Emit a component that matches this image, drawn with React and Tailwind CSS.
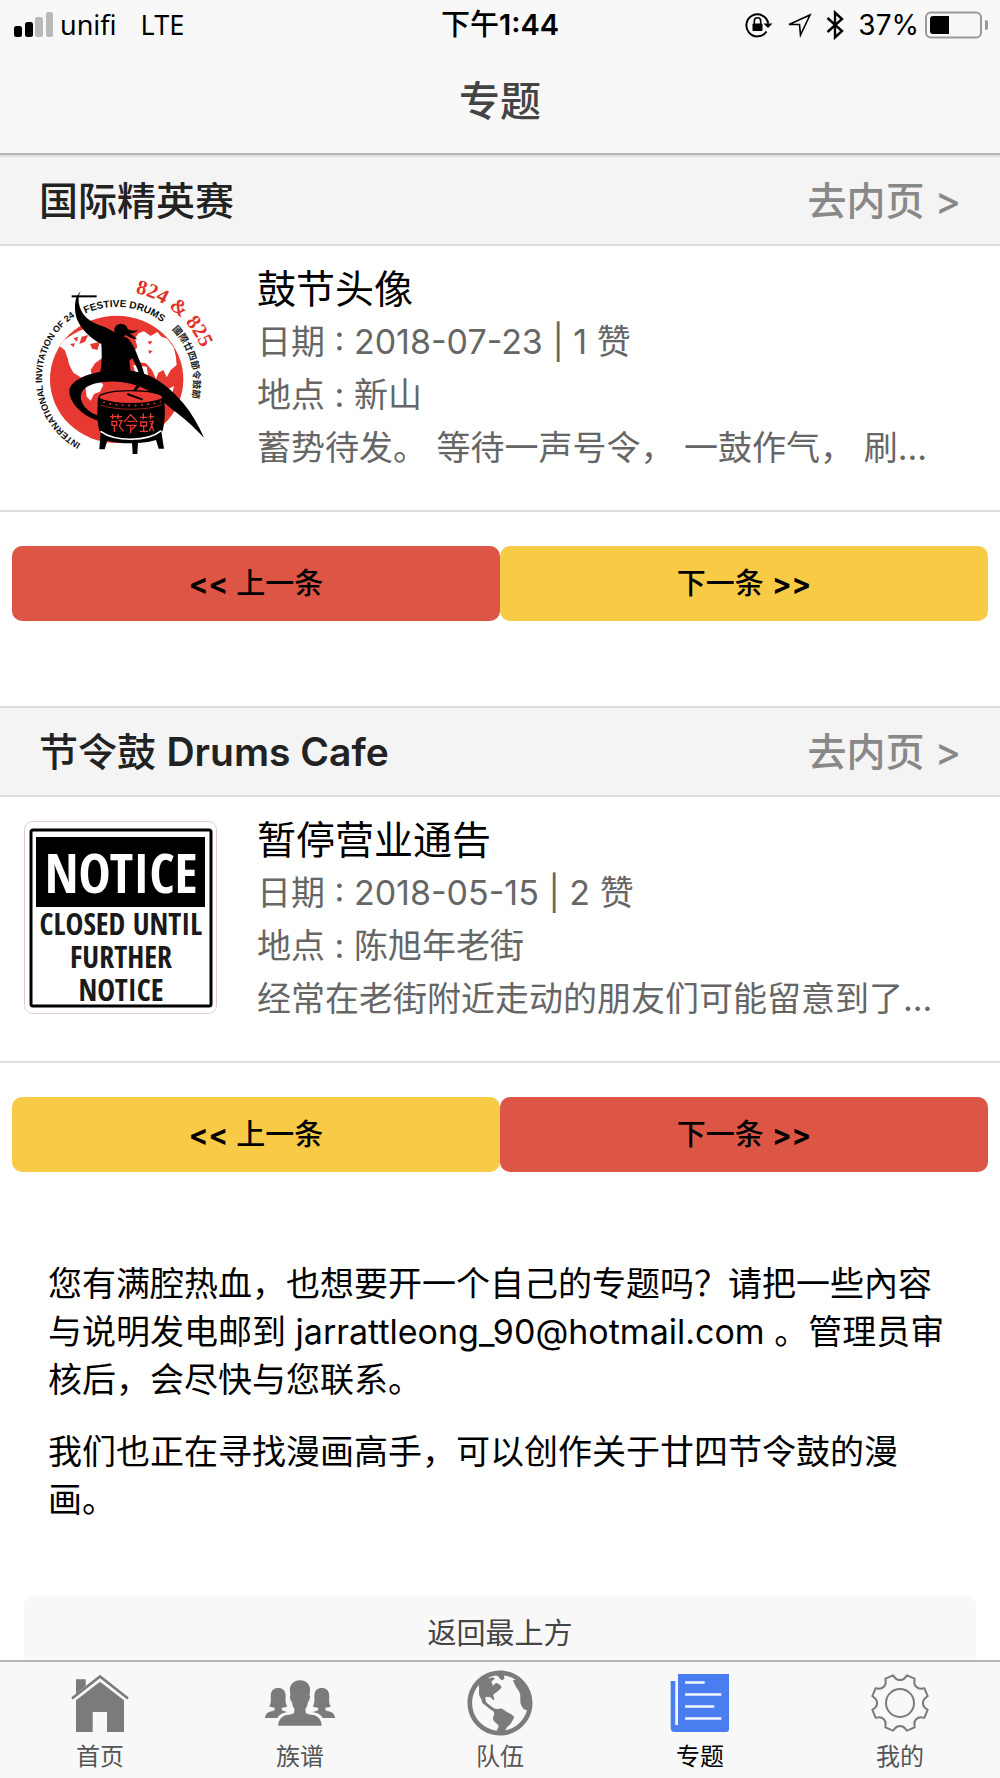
import React from 'react';
import { IoIosPeople, IoMdGlobe } from 'react-icons/io';

const DrumLogo = () => (
  <svg viewBox="12 0 579 579" className="w-full h-full" role="img" aria-label="824 & 825">
    <defs>
      <path id="ring" d="M182 521 A224 224 0 1 1 514 327" />
      <path id="ringTop" d="M196 131 A225 225 0 0 1 472 204" />
      <path id="dateRing" d="M346 69 A278 278 0 0 1 558 404" />
      <path id="hanRing" d="M456 178 A229 229 0 0 1 505 420" />
      <clipPath id="globe">
        <ellipse cx="290" cy="328" rx="200" ry="191" />
      </clipPath>
    </defs>

    <ellipse cx="290" cy="328" rx="200" ry="191" fill="#e83832" />
    <g clipPath="url(#globe)" fill="#fff">
      <path d="M132 210 C150 200 165 188 190 178 L240 205 L290 205 L262 215 L275 240 L250 262 L225 280 L212 300 L216 318 L232 322 L250 345 L240 365 L222 372 L212 392 L200 380 L196 350 L182 322 L160 308 L148 285 L142 262 L134 240 L118 228 Z" />
      <path d="M345 205 L356 190 L372 184 L392 198 L412 186 L424 200 L442 206 L462 234 L468 262 L470 285 L452 300 L440 322 L430 300 L415 308 L408 328 L396 300 L378 280 L345 275 L338 250 L352 232 Z" />
      <path d="M340 285 L380 290 L385 320 L352 340 Z" />
      <path d="M440 360 L462 348 L458 365 L442 375 Z" />
    </g>
    <g clipPath="url(#globe)" fill="#e83832">
      <path d="M160 205 L175 200 L170 215 Z M185 200 L205 195 L195 215 L178 222 Z M210 222 L240 216 L232 240 L216 236 Z M150 222 L165 220 L160 232 Z" />
      <path d="M382 215 L396 212 L392 224 Z M385 240 L398 244 L388 252 Z" />
    </g>

    <g fontFamily="'Liberation Sans', sans-serif" fontWeight="700" fill="#0a0a0a">
      <text fontSize="27"><textPath href="#ring">INTERNATIONAL INVITATION OF 24</textPath></text>
      <text fontSize="30"><textPath href="#ringTop">FESTIVE DRUMS</textPath></text>
    </g>
    <text fontFamily="'Liberation Serif', serif" fontWeight="700" fontSize="62" fill="#e0322c">
      <textPath href="#dateRing">824 &amp; 825</textPath>
    </text>
    <text fontFamily="'Noto Sans CJK TC', sans-serif" fontWeight="700" fontSize="28" fill="#222">
      <textPath href="#hanRing">國際廿四節令鼓節</textPath>
    </text>

    {/* drummer */}
    <path d="M155 76 L230 76 L230 82 L155 82 Z" fill="#000" />
    <path d="M182 62 L176 78 C174 104 182 124 198 142 C212 156 228 162 246 168 C262 174 274 182 286 188 L322 204 C338 218 348 244 356 266 C366 288 376 312 374 334 C364 346 355 354 347 363 L370 382 L364 388 L322 370 L330 365 L336 368 C345 352 354 340 362 328 C356 300 345 282 337 264 L328 272 L332 304 L240 314 C246 280 246 260 244 222 C214 208 184 178 172 150 C162 126 164 94 170 80 Z" fill="#000" />
    <circle cx="303" cy="181" r="20" fill="#000" />
    <path d="M316 174 C330 182 345 184 354 180 C347 188 338 190 330 190 L352 208 C338 208 326 200 316 194 Z" fill="#000" />
    <path d="M236 452 C190 440 148 400 148 362 C150 335 190 315 240 305 C290 296 340 300 375 312 C420 328 460 365 490 400 C515 430 535 465 552 503 C525 475 500 450 470 428 C440 408 425 385 395 368 C360 342 300 330 250 336 C215 340 185 352 182 378 C182 405 205 428 238 438 Z" fill="#000" />

    {/* drum */}
    <path d="M234 384 C232 420 230 450 238 482 C285 508 385 508 428 482 C436 450 436 420 432 384 Z" fill="#000" />
    <ellipse cx="333" cy="382" rx="96" ry="20" fill="#e83832" stroke="#000" strokeWidth="4" />
    <path d="M322 372 L368 389" stroke="#000" strokeWidth="6" />
    <path d="M236 392 C280 412 385 412 430 392" fill="none" stroke="#000" strokeWidth="16" />
    <path d="M250 396 C290 410 380 410 422 394" fill="none" stroke="#e83832" strokeWidth="5" strokeDasharray="5 14" />
    <path d="M242 405 C285 422 385 422 426 404" fill="none" stroke="#e83832" strokeWidth="2" />
    <path d="M242 484 L238 538 L254 538 L262 512 C290 519 318 520 336 520 L338 552 L352 552 L354 519 C376 518 394 515 408 510 L416 536 L432 536 L424 484 Z" fill="#000" />
    <path d="M242 484 C286 516 382 516 424 482" fill="none" stroke="#fff" strokeWidth="5" />
    <g fill="none" stroke="#e83832" strokeWidth="4">
      <path d="M270 440 H306 M278 432 V448 M294 432 V448 M276 454 H290 V466 H276 Z M283 466 V486 M296 452 H306 L298 468 L310 484" />
      <path d="M312 456 L332 434 L352 456 M322 454 H344 M318 466 H348 L334 480 M332 466 V490" />
      <path d="M360 442 H382 M370 430 V448 M362 456 H380 V468 H362 Z M360 484 H384 M371 468 V484 M392 430 V448 M386 440 H402 M388 454 H400 L388 484 M392 458 L402 484" />
    </g>
  </svg>
);

const NoticeSign = () => (
  <svg viewBox="0 0 193 193" className="w-full h-full" role="img" aria-label="Notice">
    <rect x="0.5" y="0.5" width="192" height="192" rx="8" fill="#fff" stroke="#e2c9da" />
    <rect x="7" y="9" width="180" height="176" rx="2" fill="#fff" stroke="#000" strokeWidth="3" />
    <rect x="12" y="16" width="169" height="70" fill="#000" />
    <g fontFamily="'Open Sans Condensed', 'Roboto Condensed', sans-serif" fontWeight="700" textAnchor="middle" fill="#1a1a1a">
      <text x="97" y="72" fontSize="54" fill="#fff">NOTICE</text>
      <text x="97" y="114" fontSize="30">CLOSED UNTIL</text>
      <text x="97" y="147" fontSize="30">FURTHER</text>
      <text x="97" y="180" fontSize="30">NOTICE</text>
    </g>
  </svg>
);

const HomeIcon = () => (
  <svg viewBox="0 0 80 80" width="80" height="80" fill="currentColor">
    <path d="M16 16.3 H25.7 V23 L16 31 Z" />
    <path d="M12 35.5 L40 13.5 L68 35.5" fill="none" stroke="currentColor" strokeWidth="2.6" />
    <path d="M40 18.7 L64 37.3 V69 H47 V49 H32.7 V69 H16 V37.3 Z" />
  </svg>
);

const PaperIcon = () => (
  <svg viewBox="0 0 80 80" width="80" height="80" fill="#4a7ef0">
    <path d="M10.7 18 H15.3 V62 H18 V11 H69 V66 A3 3 0 0 1 66 69 H14.7 A4 4 0 0 1 10.7 65 Z" />
    <path d="M25 19.5 H44.7 M25 31.5 H61.3 M25 43.5 H54.3 M25 55.5 H61.3" stroke="#f2f6ff" strokeWidth="2.6" />
  </svg>
);

const point = (deg, r) => {
  const a = (deg * Math.PI) / 180;
  return `${(40 + r * Math.sin(a)).toFixed(2)} ${(40 - r * Math.cos(a)).toFixed(2)}`;
};

const gearPath = Array.from({ length: 8 }, (_, i) => {
  const a = i * 45;
  return `${i ? 'L' : 'M'}${point(a - 14, 28.5)} L${point(a - 12, 26.5)} A6.6 6.6 0 0 0 ${point(a + 12, 26.5)} L${point(a + 14, 28.5)}`;
}).join(' ') + ' Z';

const GearIcon = () => (
  <svg viewBox="0 0 80 80" width="80" height="80" fill="none" stroke="currentColor" strokeWidth="2">
    <path d={gearPath} strokeLinejoin="round" />
    <circle cx="40" cy="40" r="14" />
  </svg>
);

const StatusBar = () => (
  <div className="grid grid-cols-3 items-center h-[50px] px-3 text-[28px] leading-8 text-black">
    <div className="flex items-center pl-[2px]">
      <svg width="40" height="26" viewBox="0 0 40 26">
        <rect x="0" y="14" width="8" height="11" rx="2.5" fill="#000" />
        <rect x="11" y="10" width="8" height="15" rx="2.5" fill="#000" />
        <rect x="21" y="5" width="8" height="20" rx="2.5" fill="#b9b9b9" />
        <rect x="32" y="0" width="7" height="25" rx="2.5" fill="#b9b9b9" />
      </svg>
      <span className="ml-[6px] text-[27px] font-['Noto_Sans']">unifi</span>
      <span className="ml-6 text-[27px] font-['Noto_Sans']">LTE</span>
    </div>
    <div className="text-center text-[29px] whitespace-nowrap">
      <span className="font-medium">下午</span>
      <span className="font-semibold">1:44</span>
    </div>
    <div className="flex items-center justify-end">
      <svg width="28" height="26" viewBox="0 0 28 26" fill="none" stroke="#000" strokeWidth="2">
        <path d="M21.5 19.5 A11 11 0 1 1 23.2 11.5" />
        <path d="M18.5 11.5 H27.5 L23 16 Z" fill="#000" stroke="none" />
        <rect x="7.5" y="11.5" width="10" height="7.5" rx="1" fill="#000" stroke="none" />
        <path d="M9.3 12 V9 A3.2 3.2 0 0 1 15.7 9 V12" strokeWidth="1.6" />
      </svg>
      <svg className="ml-[14px]" width="25" height="25" viewBox="0 0 25 25" fill="none" stroke="#000" strokeWidth="1.6">
        <path d="M23 2 L13.5 22 L12.5 11.5 L2 11.5 Z" />
      </svg>
      <svg className="ml-[14px]" width="18" height="30" viewBox="0 0 18 30" fill="none" stroke="#000" strokeWidth="2.4">
        <path d="M1.5 8 L16 21 L9 27.5 V2.5 L16 9 L1.5 22" />
      </svg>
      <span className="ml-[14px]">37%</span>
      <svg className="ml-[6px]" width="63" height="28" viewBox="0 0 63 28">
        <rect x="1" y="1.5" width="55" height="25" rx="5" fill="none" stroke="#9a9a9a" strokeWidth="2" />
        <path d="M8 5 H24 V23 H8 A3 3 0 0 1 5 20 V8 A3 3 0 0 1 8 5 Z" fill="#000" />
        <path d="M60 9 A5 5 0 0 1 60 19 Z" fill="#9a9a9a" />
      </svg>
    </div>
  </div>
);

const SectionHeader = ({ children }) => (
  <div className="flex items-center justify-between h-[91px] px-[39px] border-y-2 border-[#dedede] bg-[#f4f4f4]">
    <h2 className="text-[39px] leading-[48px] font-medium text-[#222]">{children}</h2>
    <a href="#" className="text-[39px] leading-[48px] font-medium text-[#888]">去内页 &gt;</a>
  </div>
);

const Item = ({ picture, title, date, likes, place, summary }) => (
  <article className="flex gap-10 pl-6 pr-10 pt-4 pb-9 border-b-2 border-[#dedede]">
    <div className="w-[193px] h-[193px] mt-2 shrink-0">{picture}</div>
    <div className="min-w-0 text-[34px] leading-[53px] text-[#666]">
      <h3 className="text-[39px] leading-[53px] text-black">{title}</h3>
      <p>日期 : {date} | {likes} 赞</p>
      <p>地点 : {place}</p>
      <p className="truncate">{summary}</p>
    </div>
  </article>
);

const pagerButton = 'flex-1 h-[75px] rounded-[10px] text-[29px] text-black';

const Pager = ({ prev, next }) => (
  <div className="flex px-3 pt-[34px]">
    <button className={`${pagerButton} ${prev}`}>
      <span className="font-bold">&lt;&lt;</span> <span className="font-medium">上一条</span>
    </button>
    <button className={`${pagerButton} ${next}`}>
      <span className="font-medium">下一条</span> <span className="font-bold">&gt;&gt;</span>
    </button>
  </div>
);

const tabs = [
  { label: '首页', icon: <HomeIcon /> },
  { label: '族谱', icon: <IoIosPeople size={80} /> },
  { label: '队伍', icon: <IoMdGlobe size={80} /> },
  { label: '专题', icon: <PaperIcon />, active: true },
  { label: '我的', icon: <GearIcon /> },
];

const App = () => {
  return (
    <div
      lang="zh-CN"
      className="flex flex-col h-screen bg-white font-[Inter,'Noto_Sans_CJK_SC',sans-serif]"
    >
      <header className="shrink-0 bg-[#f8f8f8] border-b-2 border-[#b5b5b5]">
        <StatusBar />
        <h1 className="h-[103px] leading-[103px] text-center text-[41px] font-medium text-[#444]">专题</h1>
      </header>

      <main className="flex-1 min-h-0 overflow-y-auto [scrollbar-width:none]">
        <section>
          <SectionHeader>国际精英赛</SectionHeader>
          <Item
            picture={<DrumLogo />}
            title="鼓节头像"
            date="2018-07-23"
            likes={1}
            place="新山"
            summary="蓄势待发。 等待一声号令， 一鼓作气， 刷..."
          />
          <Pager prev="bg-[#dd5544]" next="bg-[#f7cb46]" />
        </section>

        <section className="mt-[85px]">
          <SectionHeader>
            节令鼓 <span className="font-semibold">Drums Cafe</span>
          </SectionHeader>
          <Item
            picture={<NoticeSign />}
            title="暂停营业通告"
            date="2018-05-15"
            likes={2}
            place="陈旭年老街"
            summary="经常在老街附近走动的朋友们可能留意到了..."
          />
          <Pager prev="bg-[#f7cb46]" next="bg-[#dd5544]" />
        </section>

        <div className="mt-[88px] px-12 space-y-6 text-[34px] leading-[48px] text-black">
          <p>
            您有满腔热血，也想要开一个自己的专题吗？请把一些內容与说明发电邮到 jarrattleong_90@hotmail.com 。管理员审核后，会尽快与您联系。
          </p>
          <p>我们也正在寻找漫画高手，可以创作关于廿四节令鼓的漫画。</p>
        </div>

        <div className="mt-[72px] px-6 pb-6">
          <button className="w-full h-[75px] rounded-[10px] bg-[#f8f8f8] text-[29px] text-[#444]">返回最上方</button>
        </div>
      </main>

      <nav className="flex shrink-0 pb-[7px] bg-[#f8f8f8] border-t-2 border-[#b5b5b5]">
        {tabs.map((tab) => (
          <a
            key={tab.label}
            href="#"
            className={
              tab.active
                ? 'flex-1 flex flex-col items-center pt-[1px] text-black'
                : 'flex-1 flex flex-col items-center pt-[1px] text-[#555]'
            }
          >
            <span className={tab.active ? '' : 'text-[#7b7b7b]'}>{tab.icon}</span>
            <span className="text-2xl leading-7">{tab.label}</span>
          </a>
        ))}
      </nav>
    </div>
  );
};

export default App;
